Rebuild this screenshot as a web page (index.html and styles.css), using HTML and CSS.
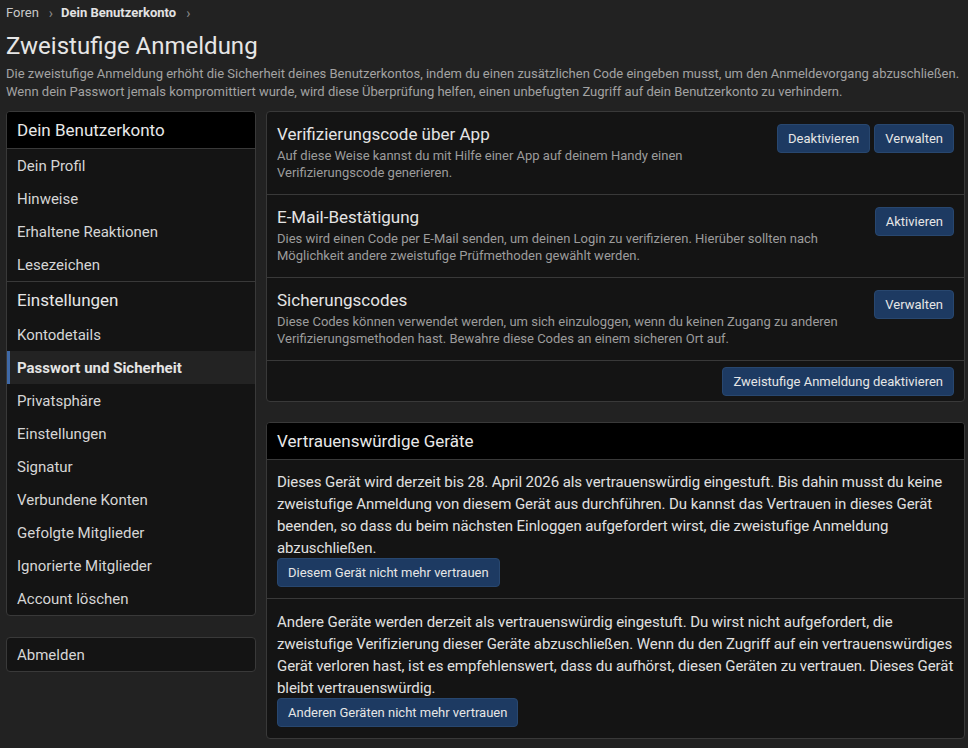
FILE: index.html
```html
<!DOCTYPE html>
<html lang="de">
<head>
<meta charset="utf-8">
<title>Zweistufige Anmeldung</title>
<link rel="stylesheet" href="styles.css">
</head>
<body>
<div class="page">
  <nav class="crumbs">
    <a class="crumb">Foren</a>
    <span class="sep">&#8250;</span>
    <a class="crumb strong">Dein Benutzerkonto</a>
    <span class="sep">&#8250;</span>
  </nav>
  <h1 class="title">Zweistufige Anmeldung</h1>
  <p class="lead">Die zweistufige Anmeldung erhöht die Sicherheit deines Benutzerkontos, indem du einen zusätzlichen Code eingeben musst, um den Anmeldevorgang abzuschließen. Wenn dein Passwort jemals kompromittiert wurde, wird diese Überprüfung helfen, einen unbefugten Zugriff auf dein Benutzerkonto zu verhindern.</p>

  <div class="layout">
    <aside class="side">
      <div class="block">
        <div class="block-head">Dein Benutzerkonto</div>
        <a class="item">Dein Profil</a>
        <a class="item">Hinweise</a>
        <a class="item">Erhaltene Reaktionen</a>
        <a class="item">Lesezeichen</a>
        <div class="section">Einstellungen</div>
        <a class="item">Kontodetails</a>
        <a class="item active">Passwort und Sicherheit</a>
        <a class="item">Privatsphäre</a>
        <a class="item">Einstellungen</a>
        <a class="item">Signatur</a>
        <a class="item">Verbundene Konten</a>
        <a class="item">Gefolgte Mitglieder</a>
        <a class="item">Ignorierte Mitglieder</a>
        <a class="item">Account löschen</a>
      </div>
      <div class="block">
        <a class="item">Abmelden</a>
      </div>
    </aside>

    <main class="main">
      <section class="card">
        <div class="row">
          <div class="row-text">
            <div class="row-title">Verifizierungscode über App</div>
            <div class="row-desc">Auf diese Weise kannst du mit Hilfe einer App auf deinem Handy einen Verifizierungscode generieren.</div>
          </div>
          <div class="row-actions">
            <button class="btn">Deaktivieren</button>
            <button class="btn">Verwalten</button>
          </div>
        </div>
        <div class="row">
          <div class="row-text">
            <div class="row-title">E-Mail-Bestätigung</div>
            <div class="row-desc">Dies wird einen Code per E-Mail senden, um deinen Login zu verifizieren. Hierüber sollten nach Möglichkeit andere zweistufige Prüfmethoden gewählt werden.</div>
          </div>
          <div class="row-actions">
            <button class="btn">Aktivieren</button>
          </div>
        </div>
        <div class="row">
          <div class="row-text">
            <div class="row-title">Sicherungscodes</div>
            <div class="row-desc">Diese Codes können verwendet werden, um sich einzuloggen, wenn du keinen Zugang zu anderen Verifizierungsmethoden hast. Bewahre diese Codes an einem sicheren Ort auf.</div>
          </div>
          <div class="row-actions">
            <button class="btn">Verwalten</button>
          </div>
        </div>
        <div class="card-foot">
          <button class="btn">Zweistufige Anmeldung deaktivieren</button>
        </div>
      </section>

      <section class="card">
        <div class="card-head">Vertrauenswürdige Geräte</div>
        <div class="body-block">
          <p class="body-text">Dieses Gerät wird derzeit bis 28. April 2026 als vertrauenswürdig eingestuft. Bis dahin musst du keine zweistufige Anmeldung von diesem Gerät aus durchführen. Du kannst das Vertrauen in dieses Gerät beenden, so dass du beim nächsten Einloggen aufgefordert wirst, die zweistufige Anmeldung abzuschließen.</p>
          <button class="btn">Diesem Gerät nicht mehr vertrauen</button>
        </div>
        <div class="body-block">
          <p class="body-text">Andere Geräte werden derzeit als vertrauenswürdig eingestuft. Du wirst nicht aufgefordert, die zweistufige Verifizierung dieser Geräte abzuschließen. Wenn du den Zugriff auf ein vertrauenswürdiges Gerät verloren hast, ist es empfehlenswert, dass du aufhörst, diesen Geräten zu vertrauen. Dieses Gerät bleibt vertrauenswürdig.</p>
          <button class="btn">Anderen Geräten nicht mehr vertrauen</button>
        </div>
      </section>
    </main>
  </div>
</div>
</body>
</html>
```
FILE: styles.css
```css
* { box-sizing: border-box; }
html, body { margin: 0; padding: 0; }
body {
  background: #222222;
  color: #dcdcdc;
  font-family: Roboto, "Noto Sans", "Liberation Sans", sans-serif;
}
.page { padding: 0 3px 0 6px; }

.crumbs {
  display: flex;
  align-items: center;
  gap: 8px;
  height: 24px;
  padding-top: 1px;
  font-size: 13px;
}
.crumb { color: #c9c9c9; }
.crumb.strong { font-weight: 700; color: #e2e2e2; }
.sep { color: #8a8a8a; font-size: 14px; margin-left: 2px; }

.title {
  margin: 7px 0 0;
  font-size: 24px;
  line-height: 30px;
  font-weight: 400;
  color: #e6e6e6;
}
.lead {
  margin: 4px 0 0;
  font-size: 13px;
  line-height: 18px;
  color: #a3a3a3;
}

.layout {
  display: flex;
  gap: 10px;
  margin-top: 10px;
  align-items: flex-start;
}
.side {
  width: 250px;
  flex: none;
  display: flex;
  flex-direction: column;
  gap: 21px;
}
.block {
  background: #141414;
  border: 1px solid #393939;
  border-radius: 4px;
  overflow: hidden;
}
.block-head {
  background: #000;
  border-bottom: 1px solid #393939;
  height: 37px;
  padding: 0 10px;
  font-size: 17px;
  line-height: 37px;
  color: #e8e8e8;
}
.item {
  display: block;
  height: 33px;
  line-height: 34px;
  font-size: 15px;
  color: #d6d6d6;
  border-left: 3px solid transparent;
  padding: 0 10px 0 7px;
}
.item.active {
  background: #232323;
  border-left-color: #3f69a6;
  font-weight: 700;
  color: #e4e4e4;
}
.section {
  border-top: 1px solid #393939;
  height: 37px;
  line-height: 37px;
  padding: 0 10px;
  font-size: 17px;
  color: #e6e6e6;
}

.main {
  flex: 1;
  display: flex;
  flex-direction: column;
  gap: 20px;
  min-width: 0;
}
.card {
  background: #141414;
  border: 1px solid #393939;
  border-radius: 4px;
  overflow: hidden;
}
.row {
  display: flex;
  gap: 20px;
  padding: 11px 10px 13px;
  border-bottom: 1px solid #393939;
}
.row-text { flex: 1; min-width: 0; }
.row-title {
  font-size: 17px;
  line-height: 22px;
  color: #e4e4e4;
  margin-bottom: 2px;
}
.row-desc {
  font-size: 13px;
  line-height: 17px;
  color: #9c9c9c;
}
.row-actions {
  display: flex;
  gap: 4px;
  padding-top: 1px;
  flex: none;
  align-items: flex-start;
}
.card-foot {
  display: flex;
  justify-content: flex-end;
  padding: 6px 10px 5px;
}
.btn {
  font-family: inherit;
  font-size: 13px;
  height: 29px;
  padding: 0 10px 1px;
  background: #1d3a62;
  border: 1px solid #28476f;
  border-radius: 4px;
  color: #e6e6e6;
}
.card-head {
  background: #000;
  border-bottom: 1px solid #393939;
  height: 37px;
  padding: 0 10px;
  font-size: 17px;
  line-height: 37px;
  color: #e8e8e8;
}
.body-block {
  padding: 11px 10px 11px;
}
.body-block .btn { display: block; margin-top: -1px; }
.body-block + .body-block {
  border-top: 1px solid #393939;
  padding-top: 12px;
  padding-bottom: 11px;
}
.body-text {
  margin: 0;
  font-size: 15px;
  line-height: 22px;
  letter-spacing: -0.08px;
  color: #e0e0e0;
}
```
